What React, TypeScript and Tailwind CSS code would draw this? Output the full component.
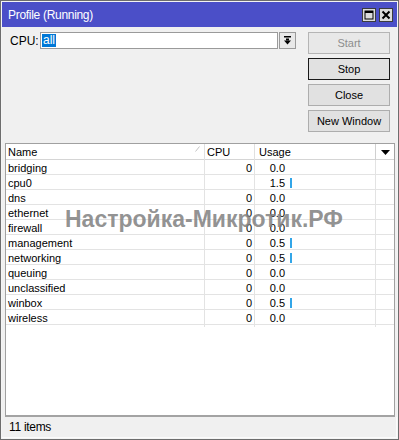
import React from "react";

type Row = { name: string; cpu: string; usage: string; bar: boolean };

const ROWS: Row[] = [
  { name: "bridging", cpu: "0", usage: "0.0", bar: false },
  { name: "cpu0", cpu: "", usage: "1.5", bar: true },
  { name: "dns", cpu: "0", usage: "0.0", bar: false },
  { name: "ethernet", cpu: "0", usage: "0.0", bar: false },
  { name: "firewall", cpu: "0", usage: "0.0", bar: false },
  { name: "management", cpu: "0", usage: "0.5", bar: true },
  { name: "networking", cpu: "0", usage: "0.5", bar: true },
  { name: "queuing", cpu: "0", usage: "0.0", bar: false },
  { name: "unclassified", cpu: "0", usage: "0.0", bar: false },
  { name: "winbox", cpu: "0", usage: "0.5", bar: true },
  { name: "wireless", cpu: "0", usage: "0.0", bar: false },
];

function TitleButton({ kind }: { kind: "max" | "close" }) {
  return (
    <div className="w-[14px] h-[14px] border border-[#3c3c3c] bg-[#dcdcdc] flex items-center justify-center">
      {kind === "max" ? (
        <svg width="10" height="10" viewBox="0 0 10 10">
          <rect x="1" y="1" width="8" height="8" fill="none" stroke="#000" strokeWidth="1" />
          <rect x="1" y="1" width="8" height="2" fill="#000" />
        </svg>
      ) : (
        <svg width="10" height="10" viewBox="0 0 10 10">
          <path d="M1.5 1.5 L8.5 8.5 M8.5 1.5 L1.5 8.5" stroke="#000" strokeWidth="2" />
        </svg>
      )}
    </div>
  );
}

function Btn({ label, disabled, focused }: { label: string; disabled?: boolean; focused?: boolean }) {
  return (
    <button
      className={
        "h-[22px] w-[82px] bg-[#e1e1e1] border text-[11px] leading-none " +
        (focused ? "border-[#1a1a1a] text-black" : disabled ? "border-[#b5b5b5] text-[#8d8d8d] bg-[#e8e8e8]" : "border-[#adadad] text-black")
      }
    >
      {label}
    </button>
  );
}

export default function App() {
  return (
    <div
      className="relative w-[399px] h-[440px] border border-[#6d6d6d] bg-[#f0f0f0] text-black text-[11px] overflow-hidden"
      style={{ fontFamily: '"Liberation Sans", Arial, sans-serif' }}
    >
      <div className="flex flex-col h-full border border-[#f4f4f4]">
        {/* Title bar */}
        <div className="h-[25px] bg-[#4b4fc8] flex items-center pl-[6px] pr-[4px]">
          <span className="text-white text-[12px] tracking-[-0.3px]">Profile (Running)</span>
          <div className="ml-auto flex gap-[3px]">
            <TitleButton kind="max" />
            <TitleButton kind="close" />
          </div>
        </div>

        {/* Top controls */}
        <div className="h-[116px] pt-[5px] pl-[8px] pr-[7px] flex">
          <div className="flex items-start">
            <span className="w-[30px] h-[17px] flex items-center text-[12px]">CPU:</span>
            <div className="w-[238px] h-[17px] bg-white border border-[#9a9a9a] flex items-center pl-[1px]">
              <span className="bg-[#0078d7] text-white text-[12px] leading-[13px] px-[1px]">all</span>
            </div>
            <div className="ml-[1px] w-[17px] h-[17px] bg-[#e8e8e8] border border-[#9a9a9a] flex items-center justify-center">
              <svg width="9" height="9" viewBox="0 0 9 9">
                <rect x="1" y="0" width="7" height="1.5" fill="#000" />
                <rect x="3" y="2.5" width="3" height="2" fill="#000" />
                <path d="M1 4.5 L8 4.5 L4.5 8.5 Z" fill="#000" />
              </svg>
            </div>
          </div>
          <div className="ml-auto flex flex-col gap-[4px]">
            <Btn label="Start" disabled />
            <Btn label="Stop" focused />
            <Btn label="Close" />
            <Btn label="New Window" />
          </div>
        </div>

        {/* Table */}
        <div className="ml-[3px] mr-[2px] h-[274px] bg-white border border-[#a0a0a0] border-b-2 border-b-[#a3a3a3] flex flex-col">
          <div className="grid grid-cols-[199px_50px_121px_18px] h-[16px] border-b border-[#d5d5d5]">
            <div className="relative border-r border-[#e0e0e0] pl-[2px] flex items-center">
              Name
              <svg className="absolute right-[4px] top-[2px]" width="5" height="6" viewBox="0 0 5 6">
                <path d="M0.5 5.5 L4.5 0.5" stroke="#c4c4c4" strokeWidth="1" />
              </svg>
            </div>
            <div className="border-r border-[#e0e0e0] pl-[2px] flex items-center">CPU</div>
            <div className="border-r border-[#d0d0d0] pl-[4px] flex items-center">Usage</div>
            <div className="flex items-center justify-center">
              <svg width="9" height="5" viewBox="0 0 9 5">
                <path d="M0 0 L9 0 L4.5 5 Z" fill="#000" />
              </svg>
            </div>
          </div>
          {ROWS.map((r) => (
            <div key={r.name} className="grid grid-cols-[199px_50px_121px_18px] h-[15px] border-b border-[#e3e3e3]">
              <div className="border-r border-[#e3e3e3] pl-[2px] flex items-center">{r.name}</div>
              <div className="border-r border-[#e3e3e3] pr-[2px] flex items-center justify-end">{r.cpu}</div>
              <div className="border-r border-[#e3e3e3] flex items-center">
                <span className="w-[30px] text-right">{r.usage}</span>
                {r.bar && <span className="ml-[5px] w-[2px] h-[10px] bg-[#33a6e8]" />}
              </div>
              <div />
            </div>
          ))}
        </div>

        {/* Status bar */}
        <div className="flex-1 flex items-center pl-[7px] border-b border-r border-[#fbfbfb]">
          <span className="text-[12px] tracking-[-0.3px]">11 items</span>
        </div>
      </div>

      {/* Watermark */}
      <div className="absolute left-[64px] top-[207px] text-[23px] leading-none font-bold text-[#808080]/85 pointer-events-none whitespace-nowrap">
        Настройка-Микротик.РФ
      </div>
    </div>
  );
}
